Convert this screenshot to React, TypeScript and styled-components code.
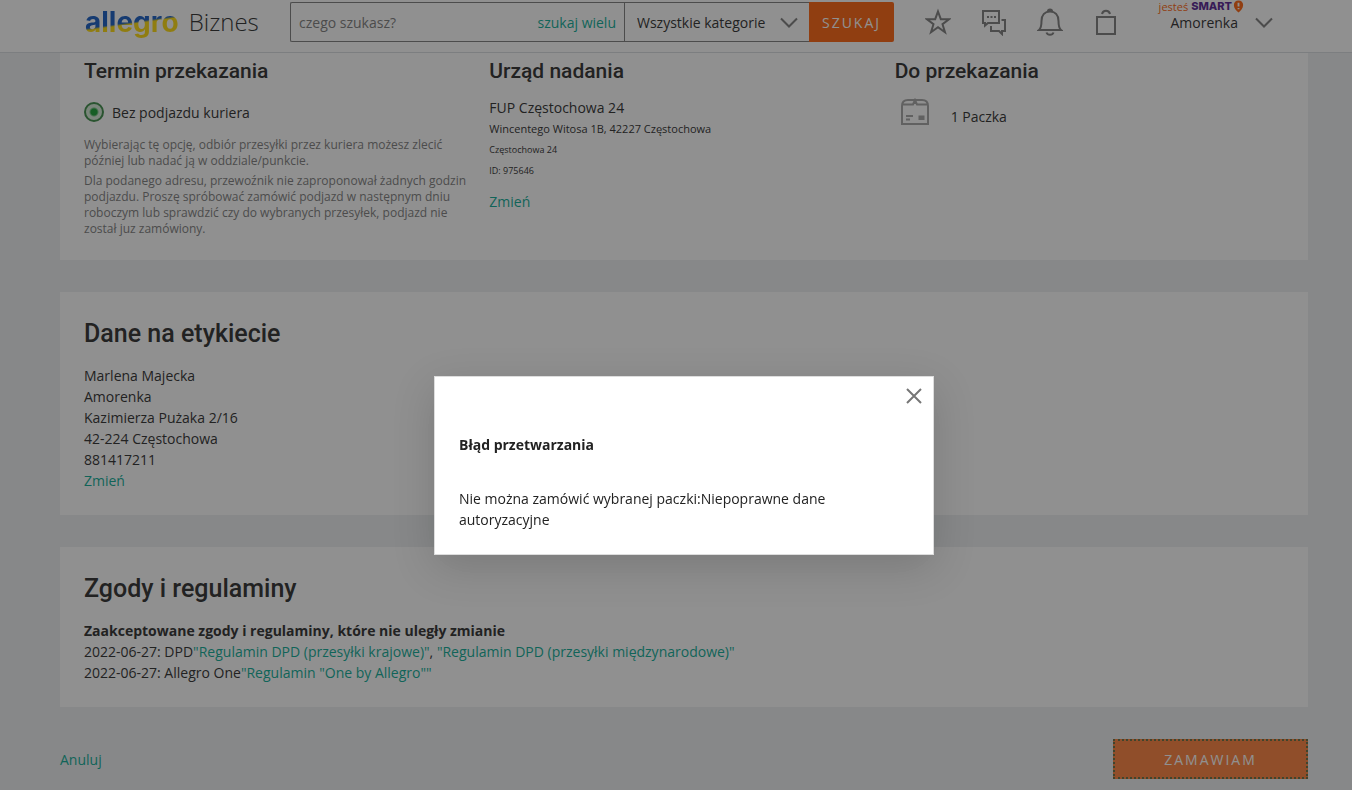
import React from "react";
import styled, { createGlobalStyle } from "styled-components";

const GlobalStyle = createGlobalStyle`
  *, *::before, *::after { box-sizing: border-box; }
  body {
    margin: 0;
    background: #eceff1;
    color: #222;
    font: 14px/21px "Open Sans", sans-serif;
  }
  h1, h2, h3, p { margin: 0; }
  button, input, select { font: inherit; color: inherit; border-radius: 0; margin: 0; }
  button { cursor: pointer; }
`;

const Header = styled.header`
  height: 53px;
  padding: 0 79px 0 85px;
  display: flex;
  align-items: flex-start;
  background: #fff;
  border-bottom: 1px solid #d6dbde;
`;

const Logo = styled.a`
  width: 205px;
  height: 40px;
  flex: none;
  display: flex;
  align-items: center;
  gap: 10px;
  margin-top: 2px;
  color: #222;
  text-decoration: none;
`;

const Brand = styled.span`
  font: 700 28px/40px Inter, sans-serif;
  color: transparent;
  background: linear-gradient(172deg, #0a54c0 50%, #ffd800 54%);
  background-clip: text;
  -webkit-background-clip: text;
`;

const Division = styled.span`
  font-size: 24px;
  line-height: 40px;
  font-weight: 300;
`;

const Search = styled.form`
  display: flex;
  flex: 0 1 604px;
  height: 40px;
  margin-top: 2px;
`;

const SearchField = styled.div`
  display: flex;
  align-items: center;
  flex: 1;
  min-width: 0;
  padding: 0 8px;
  border: 1px solid #767676;
  border-right: 0;
  border-radius: 2px 0 0 2px;
`;

const SearchInput = styled.input`
  flex: 1;
  min-width: 0;
  height: 36px;
  padding: 0;
  border: 0;
  outline: 0;
  background: none;
  &::placeholder { color: #767676; opacity: 1; }
`;

const CategoryBox = styled.div`
  position: relative;
  flex: none;
  width: 185px;
  border: 1px solid #767676;
  border-right: 0;
  svg { position: absolute; right: 11px; top: 14px; pointer-events: none; }
`;

const CategorySelect = styled.select`
  appearance: none;
  width: 100%;
  height: 38px;
  padding: 0 32px 0 12px;
  border: 0;
  background: none;
`;

const Action = styled.button<{ $wide?: boolean }>`
  flex: none;
  width: ${(p) => (p.$wide ? 195 : 85)}px;
  height: 40px;
  padding: 0;
  border: ${(p) => (p.$wide ? "2px dotted #5f6636" : "0")};
  border-radius: ${(p) => (p.$wide ? "0" : "0 2px 2px 0")};
  background: ${(p) => (p.$wide ? "#ff7b33" : "#ff5a00")};
  color: #fff;
  text-transform: uppercase;
  letter-spacing: 2px;
`;

const IconBar = styled.nav`
  display: flex;
  gap: 24px;
  margin: 2px 0 0 28px;
`;

const IconButton = styled.button`
  width: 32px;
  height: 40px;
  padding: 0;
  border: 0;
  background: none;
  display: grid;
  place-items: center;
`;

const Account = styled.button`
  display: flex;
  align-items: center;
  gap: 11px;
  margin: 0 0 0 auto;
  padding: 0;
  border: 0;
  background: none;
  > svg { margin-top: 12px; }
`;

const AccountText = styled.span`
  display: flex;
  flex-direction: column;
  align-items: flex-end;
`;

const AccountName = styled.span`
  padding-right: 6px;
  line-height: 20px;
`;

const Smart = styled.span`
  display: flex;
  align-items: center;
  gap: 3px;
  font-size: 11px;
  line-height: 13px;
  color: #ff5a00;
  b { font: 800 11px/13px Inter, sans-serif; color: #4d148c; }
  svg { margin-left: -2px; }
`;

const Main = styled.main`
  padding: 0 44px 12px 60px;
  display: flex;
  flex-direction: column;
  gap: 32px;
`;

const Card = styled.section<{ $joined?: boolean }>`
  background: #fff;
  padding: ${(p) => (p.$joined ? "4px 24px 19px" : "24px")};
`;

const Columns = styled.div`
  display: grid;
  grid-template-columns: repeat(3, 1fr);
  gap: 16px;
`;

const SectionTitle = styled.h2`
  font: 500 25px/36px Roboto, sans-serif;
  margin-bottom: 13px;
`;

const ColumnTitle = styled.h3`
  font: 500 21px/28px Roboto, sans-serif;
  margin-bottom: 12px;
`;

const Option = styled.label`
  display: flex;
  align-items: center;
  gap: 8px;
  height: 30px;
  margin-bottom: 10px;
`;

const Radio = styled.input`
  appearance: none;
  width: 20px;
  height: 20px;
  border: 2px solid #32873f;
  border-radius: 50%;
  background: radial-gradient(circle, #0a9a28 3px, #d4ead6 5px);
`;

const Hint = styled.p`
  font-size: 12px;
  line-height: 16px;
  color: #767676;
  margin-bottom: 4px;
`;

const Line = styled.p<{ $size?: number }>`
  font-size: ${(p) => p.$size ?? 14}px;
`;

const Link = styled.a`
  color: #00a790;
  text-decoration: none;
`;

const OfficeLink = styled(Link)`
  display: block;
  margin-top: 10px;
`;

const Parcel = styled.div`
  display: flex;
  align-items: center;
  gap: 22px;
  padding-left: 6px;
  span { padding-top: 9px; }
`;

const Footer = styled.footer`
  display: flex;
  justify-content: space-between;
  align-items: center;
`;

const Overlay = styled.div`
  position: fixed;
  inset: 0;
  display: flex;
  align-items: center;
  justify-content: center;
  padding: 141px 0 0 16px;
  background: rgba(34, 34, 34, 0.5);
`;

const Dialog = styled.div`
  position: relative;
  width: 500px;
  padding: 57px 24px 24px;
  border: 1px solid #ddd;
  background: #fff;
  box-shadow: 0 12px 40px rgba(0, 0, 0, 0.16);
`;

const DialogTitle = styled.h1`
  font-size: 14px;
  line-height: 21px;
  margin-bottom: 33px;
`;

const Close = styled.button`
  position: absolute;
  top: 3px;
  right: 3px;
  width: 32px;
  height: 32px;
  padding: 0;
  border: 0;
  background: none;
  display: grid;
  place-items: center;
`;

const Icon = ({ w = 26, h = 28, children }: { w?: number; h?: number; children: React.ReactNode }) => (
  <svg width={w} height={h} viewBox={`0 0 ${w} ${h}`} fill="none" stroke="#767676" strokeWidth="2" aria-hidden="true">
    {children}
  </svg>
);

const Chevron = () => (
  <Icon w={18} h={12}>
    <path d="M1 1.5 9 9.5 17 1.5" />
  </Icon>
);

const address = ["Marlena Majecka", "Amorenka", "Kazimierza Pużaka 2/16", "42-224 Częstochowa", "881417211"];

export default function App() {
  return (
    <>
      <GlobalStyle />
      <Header>
        <Logo href="#">
          <Brand>allegro</Brand>
          <Division>Biznes</Division>
        </Logo>
        <Search>
          <SearchField>
            <SearchInput placeholder="czego szukasz?" aria-label="czego szukasz?" />
            <Link href="#">szukaj wielu</Link>
          </SearchField>
          <CategoryBox>
            <CategorySelect aria-label="Kategoria">
              <option>Wszystkie kategorie</option>
            </CategorySelect>
            <Chevron />
          </CategoryBox>
          <Action type="button">Szukaj</Action>
        </Search>
        <IconBar>
          <IconButton aria-label="Obserwowane">
            <Icon>
              <path d="M13 3.5 15.800 11.200H24L17.500 16.200 20 24.300 13 19.300 6 24.300 8.500 16.200 2 11.200H10.200Z" />
            </Icon>
          </IconButton>
          <IconButton aria-label="Wiadomości">
            <Icon>
              <path d="M2 3H18V15H7L4 17.500V15H2Z M20.500 12H24V23H21V26L18 23H10V18" />
              <path d="M6 9h2M9.500 9h2M13 9h2" />
            </Icon>
          </IconButton>
          <IconButton aria-label="Powiadomienia">
            <Icon>
              <path d="M2 22C4.500 20 4.500 17 4.500 13C4.500 7 8 3.500 13 3.500S21.500 7 21.500 13C21.500 17 21.500 20 24 22Z M11 3C11 1 15 1 15 3" />
              <path d="M9.500 24.500C10.500 27.500 15.500 27.500 16.500 24.500" />
            </Icon>
          </IconButton>
          <IconButton aria-label="Koszyk">
            <Icon>
              <path d="M4 9H22V26H4Z M9 6C10 1.500 16 1.500 17 6" />
            </Icon>
          </IconButton>
        </IconBar>
        <Account>
          <AccountText>
            <Smart>
              jesteś <b>SMART</b>
              <svg width="11" height="13" viewBox="0 0 11 14" aria-hidden="true">
                <path d="M5.500 0.500C8.500 .5 10.500 2.500 10.500 5.500C10.500 9 8 11.500 5.500 13.500C3 11.500 .5 9 .5 5.500C.5 2.500 2.500 .5 5.500 .5Z" fill="#ff5a00" />
                <path d="M5.500 3V7M5.500 8.500V10" stroke="#fff" strokeWidth="2" />
              </svg>
            </Smart>
            <AccountName>Amorenka</AccountName>
          </AccountText>
          <Chevron />
        </Account>
      </Header>

      <Main>
        <Card $joined>
          <Columns>
            <div>
              <ColumnTitle>Termin przekazania</ColumnTitle>
              <Option>
                <Radio type="radio" name="pickup" defaultChecked />
                Bez podjazdu kuriera
              </Option>
              <Hint>Wybierając tę opcję, odbiór przesyłki przez kuriera możesz zlecić później lub nadać ją w oddziale/punkcie.</Hint>
              <Hint>
                Dla podanego adresu, przewoźnik nie zaproponował żadnych godzin podjazdu. Proszę spróbować zamówić podjazd w
                następnym dniu roboczym lub sprawdzić czy do wybranych przesyłek, podjazd nie został juz zamówiony.
              </Hint>
            </div>
            <div>
              <ColumnTitle>Urząd nadania</ColumnTitle>
              <Line>FUP Częstochowa 24</Line>
              <Line $size={11}>Wincentego Witosa 1B, 42227 Częstochowa</Line>
              <Line $size={9}>Częstochowa 24</Line>
              <Line $size={9}>ID: 975646</Line>
              <OfficeLink href="#">Zmień</OfficeLink>
            </div>
            <div>
              <ColumnTitle>Do przekazania</ColumnTitle>
              <Parcel>
                <svg width="28" height="28" viewBox="0 0 28 28" fill="none" stroke="#a0a0a0" strokeWidth="2" aria-hidden="true">
                  <path d="M1 8V26H27V8C27 4 25 2 21 2H7C3 2 1 4 1 8ZM1 6.500H12L14 2 16 6.500H27M14 2V6" />
                  <path d="M5 18h7M5 21.500h4" />
                  <path d="M18.500 18.500h4v2.500h-4Z" fill="#a0a0a0" />
                </svg>
                <span>1 Paczka</span>
              </Parcel>
            </div>
          </Columns>
        </Card>

        <Card>
          <SectionTitle>Dane na etykiecie</SectionTitle>
          {address.map((row) => (
            <Line key={row}>{row}</Line>
          ))}
          <Link href="#">Zmień</Link>
        </Card>

        <Card>
          <SectionTitle>Zgody i regulaminy</SectionTitle>
          <Line as="h3">Zaakceptowane zgody i regulaminy, które nie uległy zmianie</Line>
          <Line>
            2022-06-27: DPD<Link href="#">"Regulamin DPD (przesyłki krajowe)"</Link>,{" "}
            <Link href="#">"Regulamin DPD (przesyłki międzynarodowe)"</Link>
          </Line>
          <Line>
            2022-06-27: Allegro One<Link href="#">"Regulamin "One by Allegro""</Link>
          </Line>
        </Card>

        <Footer>
          <Link href="#">Anuluj</Link>
          <Action type="button" $wide>
            Zamawiam
          </Action>
        </Footer>
      </Main>

      <Overlay>
        <Dialog role="dialog" aria-modal="true" aria-labelledby="dialog-title">
          <Close aria-label="Zamknij">
            <Icon w={16} h={16}>
              <path d="M1 1 15 15M15 1 1 15" />
            </Icon>
          </Close>
          <DialogTitle id="dialog-title">Błąd przetwarzania</DialogTitle>
          <Line>Nie można zamówić wybranej paczki:Niepoprawne dane autoryzacyjne</Line>
        </Dialog>
      </Overlay>
    </>
  );
}
